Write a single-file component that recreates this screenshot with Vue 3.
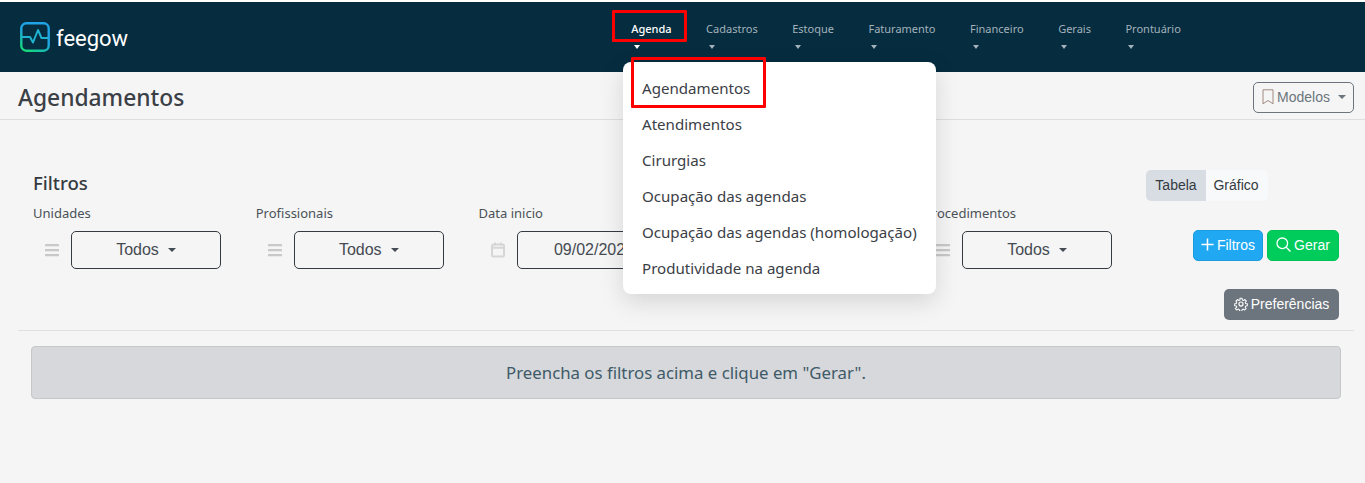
<script setup>
const navItems = ['Agenda', 'Cadastros', 'Estoque', 'Faturamento', 'Financeiro', 'Gerais', 'Prontuário']
const menuItems = ['Agendamentos', 'Atendimentos', 'Cirurgias', 'Ocupação das agendas', 'Ocupação das agendas (homologação)', 'Produtividade na agenda']
const fields = [
  { label: 'Unidades', value: 'Todos', icon: 'bars', caret: true },
  { label: 'Profissionais', value: 'Todos', icon: 'bars', caret: true },
  { label: 'Data inicio', value: '09/02/2024', icon: 'cal', caret: false },
  { label: 'Data fim', value: '09/02/2024', icon: 'cal', caret: false },
  { label: 'Procedimentos', value: 'Todos', icon: 'bars', caret: true }
]
</script>

<template>
  <div class="page">
    <header class="navbar">
      <a class="brand">
        <svg class="brand-icon" width="30" height="30" viewBox="0 0 30 30" fill="none">
          <defs>
            <linearGradient id="lg" x1="0.5" y1="0.45" x2="0.2" y2="1">
              <stop offset="0" stop-color="#20a4e6" />
              <stop offset="1" stop-color="#14d67c" />
            </linearGradient>
          </defs>
          <rect x="1.300" y="1.300" width="27.400" height="27.400" rx="5" stroke="url(#lg)" stroke-width="2.400" />
          <path d="M1.500 15H10L13 20.500L18 8L21.500 16H28.500" stroke="#1fb3cf" stroke-width="2" stroke-linejoin="round" />
        </svg>
        <span class="brand-name">feegow</span>
      </a>
      <nav class="nav">
        <div v-for="(item, i) in navItems" :key="item" class="nav-item" :class="{ active: i === 0 }">
          <span>{{ item }}</span>
          <i class="nav-caret"></i>
        </div>
      </nav>
    </header>

    <div class="title-bar">
      <h1>Agendamentos</h1>
      <button class="models">
        <svg width="14" height="16" viewBox="0 0 14 16" fill="none" stroke="#a08a80" stroke-width="1">
          <path d="M2 .8h10v14L7 11.500 2 14.800z" />
        </svg>
        <span>Modelos</span>
        <i class="caret models-caret"></i>
      </button>
    </div>

    <section class="filters">
      <div class="filters-left">
        <h2>Filtros</h2>
        <div class="fields">
          <div v-for="f in fields" :key="f.label" class="field">
            <label>{{ f.label }}</label>
            <div class="field-row">
              <div class="field-icon">
                <svg v-if="f.icon === 'bars'" width="14" height="14" viewBox="0 0 14 14" fill="#c8c8c8">
                  <rect x="0" y="1" width="14" height="2.200" rx=".5" />
                  <rect x="0" y="6" width="14" height="2.200" rx=".5" />
                  <rect x="0" y="11" width="14" height="2.200" rx=".5" />
                </svg>
                <svg v-else width="14" height="16" viewBox="0 0 14 16" fill="none" stroke="#d6d6d6" stroke-width="2">
                  <rect x="1" y="2.500" width="12" height="12" rx="1.500" />
                  <path d="M1 5.800h12M4 .5v3M10 .5v3" />
                </svg>
              </div>
              <button class="select" :class="{ plain: !f.caret }">
                <span>{{ f.value }}</span>
                <i v-if="f.caret" class="caret"></i>
              </button>
            </div>
          </div>
        </div>
      </div>

      <div class="filters-right">
        <div class="toggle">
          <span class="toggle-on">Tabela</span>
          <span class="toggle-off">Gráfico</span>
        </div>
        <div class="actions">
          <button class="btn btn-blue">
            <svg width="13" height="13" viewBox="0 0 13 13" stroke="#fff" stroke-width="1.500"><path d="M6.500 .5v12M.5 6.500h12" /></svg>
            Filtros
          </button>
          <button class="btn btn-green">
            <svg width="15" height="15" viewBox="0 0 15 15" fill="none" stroke="#fff" stroke-width="1.300"><circle cx="6.300" cy="6.300" r="5.300" /><path d="M10.200 10.200l4.300 4.300" /></svg>
            Gerar
          </button>
        </div>
        <button class="btn btn-gray">
          <svg width="14" height="14" viewBox="0 0 24 24" fill="none" stroke="#fff" stroke-width="2" stroke-linejoin="round">
            <circle cx="12" cy="12" r="3.500" />
            <path d="M10 2h4l.6 3 2.300 1 2.600-1.700 2.800 2.800L20 9.700l1 2.300 3 .5v3.500l-3 .5-1 2.300 1.700 2.600-2.800 2.800-2.600-1.700-2.300 1-.6 3h-4l-.6-3-2.300-1-2.600 1.700-2.800-2.800L4 18.800l-1-2.300-3-.5v-3.500l3-.5 1-2.300L2.300 7.100l2.800-2.800L7.700 6l2.300-1z" transform="translate(1.200 .5) scale(.9)" />
          </svg>
          Preferências
        </button>
      </div>
    </section>

    <hr class="divider" />

    <div class="alert">Preencha os filtros acima e clique em "Gerar".</div>

    <ul class="dropdown">
      <li v-for="m in menuItems" :key="m">{{ m }}</li>
    </ul>
    <div class="mark mark-nav"></div>
    <div class="mark mark-menu"></div>
  </div>
</template>

<style>
html, body { margin: 0; background: #f5f5f5; }
</style>

<style scoped>
.page {
  position: relative;
  height: 483px;
  overflow: hidden;
  padding-top: 2px;
  box-sizing: border-box;
  background: #f5f5f5;
  font-family: "Noto Sans", sans-serif;
  color: #343a40;
}
.page::before {
  content: "";
  position: absolute;
  left: 0; right: 0; top: 0;
  height: 2px;
  background: #fff;
}
.navbar {
  display: flex;
  height: 70px;
  background: #052c3f;
  box-sizing: border-box;
  padding-left: 20px;
}
.brand { display: flex; align-items: flex-start; width: 594px; padding-top: 20px; box-sizing: border-box; }
.brand-icon { flex: none; }
.brand-name {
  margin: 1px 0 0 6px;
  font-family: "Roboto", sans-serif;
  font-size: 22px;
  line-height: 31px;
  color: #fff;
  font-weight: 400;
}
.nav { display: flex; }
.nav-item {
  padding: 18px 17.250px 0;
  font-size: 11px;
  line-height: 17px;
  color: #a3b2bb;
}
.nav-item span { display: block; white-space: nowrap; }
.nav-item.active { color: #fff; font-weight: 500; }
.nav-caret {
  display: block;
  width: 0; height: 0;
  margin: 8px 0 0 3px;
  border-left: 3.500px solid transparent;
  border-right: 3.500px solid transparent;
  border-top: 4px solid currentColor;
}
.title-bar {
  display: flex;
  justify-content: space-between;
  align-items: center;
  height: 48px;
  margin: 0;
  padding: 3px 11px 0 18px;
  border-bottom: 1px solid #dedede;
  box-sizing: border-box;
}
h1 { margin: 1px 0 0; font-size: 22.800px; font-weight: 500; color: #3b4046; line-height: 52px; }
.models {
  display: flex;
  align-items: center;
  gap: 2px;
  width: 101px;
  height: 31px;
  padding: 0 7px;
  box-sizing: border-box;
  background: transparent;
  border: 1px solid #6c757d;
  border-radius: 5px;
  color: #6c757d;
  font: 14px "Liberation Sans", sans-serif;
}
.caret {
  display: inline-block;
  width: 0; height: 0;
  border-left: 4.500px solid transparent;
  border-right: 4.500px solid transparent;
  border-top: 4.500px solid currentColor;
}
.models-caret { margin-left: 6px; }
.filters {
  display: flex;
  padding: 50px 26px 0 33px;
}
.filters-left { width: 1115px; flex: none; }
h2 { margin: 0; font-size: 18.600px; font-weight: 500; line-height: 25px; color: #343a40; }
.fields { display: grid; grid-template-columns: repeat(5, 222.750px); margin-top: 9px; }
label { display: block; font-size: 13px; line-height: 19px; color: #4a5157; }
.field-row { display: flex; align-items: center; margin-top: 8px; }
.field-icon { width: 38px; flex: none; display: flex; justify-content: center; }
.select {
  width: 150px;
  height: 38px;
  flex: none;
  background: transparent;
  border: 1px solid #343a40;
  border-radius: 5px;
  font: 16px "Liberation Sans", sans-serif;
  color: #454b52;
  display: flex;
  align-items: center;
  justify-content: center;
  gap: 9px;
  padding: 0;
  white-space: nowrap;
}
.select.plain { padding-left: 5px; box-sizing: border-box; }
.filters-right { flex: 1; display: flex; flex-direction: column; align-items: flex-end; }
.toggle { display: flex; align-self: flex-start; margin-left: -2px; font: 14px "Liberation Sans", sans-serif; color: #343a40; }
.toggle span { height: 31px; line-height: 31px; text-align: center; box-sizing: border-box; }
.toggle-on { width: 60px; background: #d8dde4; border-radius: 5px 0 0 5px; }
.toggle-off { width: 62px; padding-right: 2px; background: #f8f9fa; border-radius: 0 5px 5px 0; }
.actions { display: flex; gap: 4px; margin-top: 29px; }
.btn {
  display: flex;
  align-items: center;
  justify-content: center;
  gap: 3px;
  height: 31px;
  padding: 0 0 2px;
  border-radius: 5px;
  border: 1px solid transparent;
  color: #fff;
  font: 14px "Liberation Sans", sans-serif;
  box-sizing: border-box;
}
.btn-blue { width: 70px; background: #20a8f2; border-color: #1c9ce0; }
.btn-green { width: 72px; background: #00cc5c; border-color: #00c257; }
.btn-gray { width: 115px; margin-top: 28px; background: #6c757d; }
.divider {
  margin: 10px 11px 0 18px;
  border: 0;
  border-top: 1px solid #e0e0e0;
}
.alert {
  margin: 15px 24px 0 31px;
  height: 53px;
  line-height: 51px;
  box-sizing: border-box;
  background: #d6d8db;
  border: 1px solid #c6c8ca;
  border-radius: 4px;
  text-align: center;
  font-size: 16.800px;
  color: #3f5a68;
}
.dropdown {
  position: absolute;
  left: 623px;
  top: 62px;
  width: 313px;
  margin: 0;
  padding: 8px 0;
  box-sizing: border-box;
  list-style: none;
  background: #fff;
  border-radius: 8px;
  box-shadow: 0 8px 24px rgba(0, 0, 0, .13);
  font-size: 15.100px;
  color: #3b4046;
}
.dropdown li { height: 36px; line-height: 36px; padding-left: 19px; white-space: nowrap; }
.mark { position: absolute; border: 3px solid #ff0000; box-sizing: border-box; border-radius: 1px; }
.mark-nav { left: 612px; top: 10px; width: 75px; height: 32px; }
.mark-menu { left: 631px; top: 57px; width: 135px; height: 51px; }
</style>
